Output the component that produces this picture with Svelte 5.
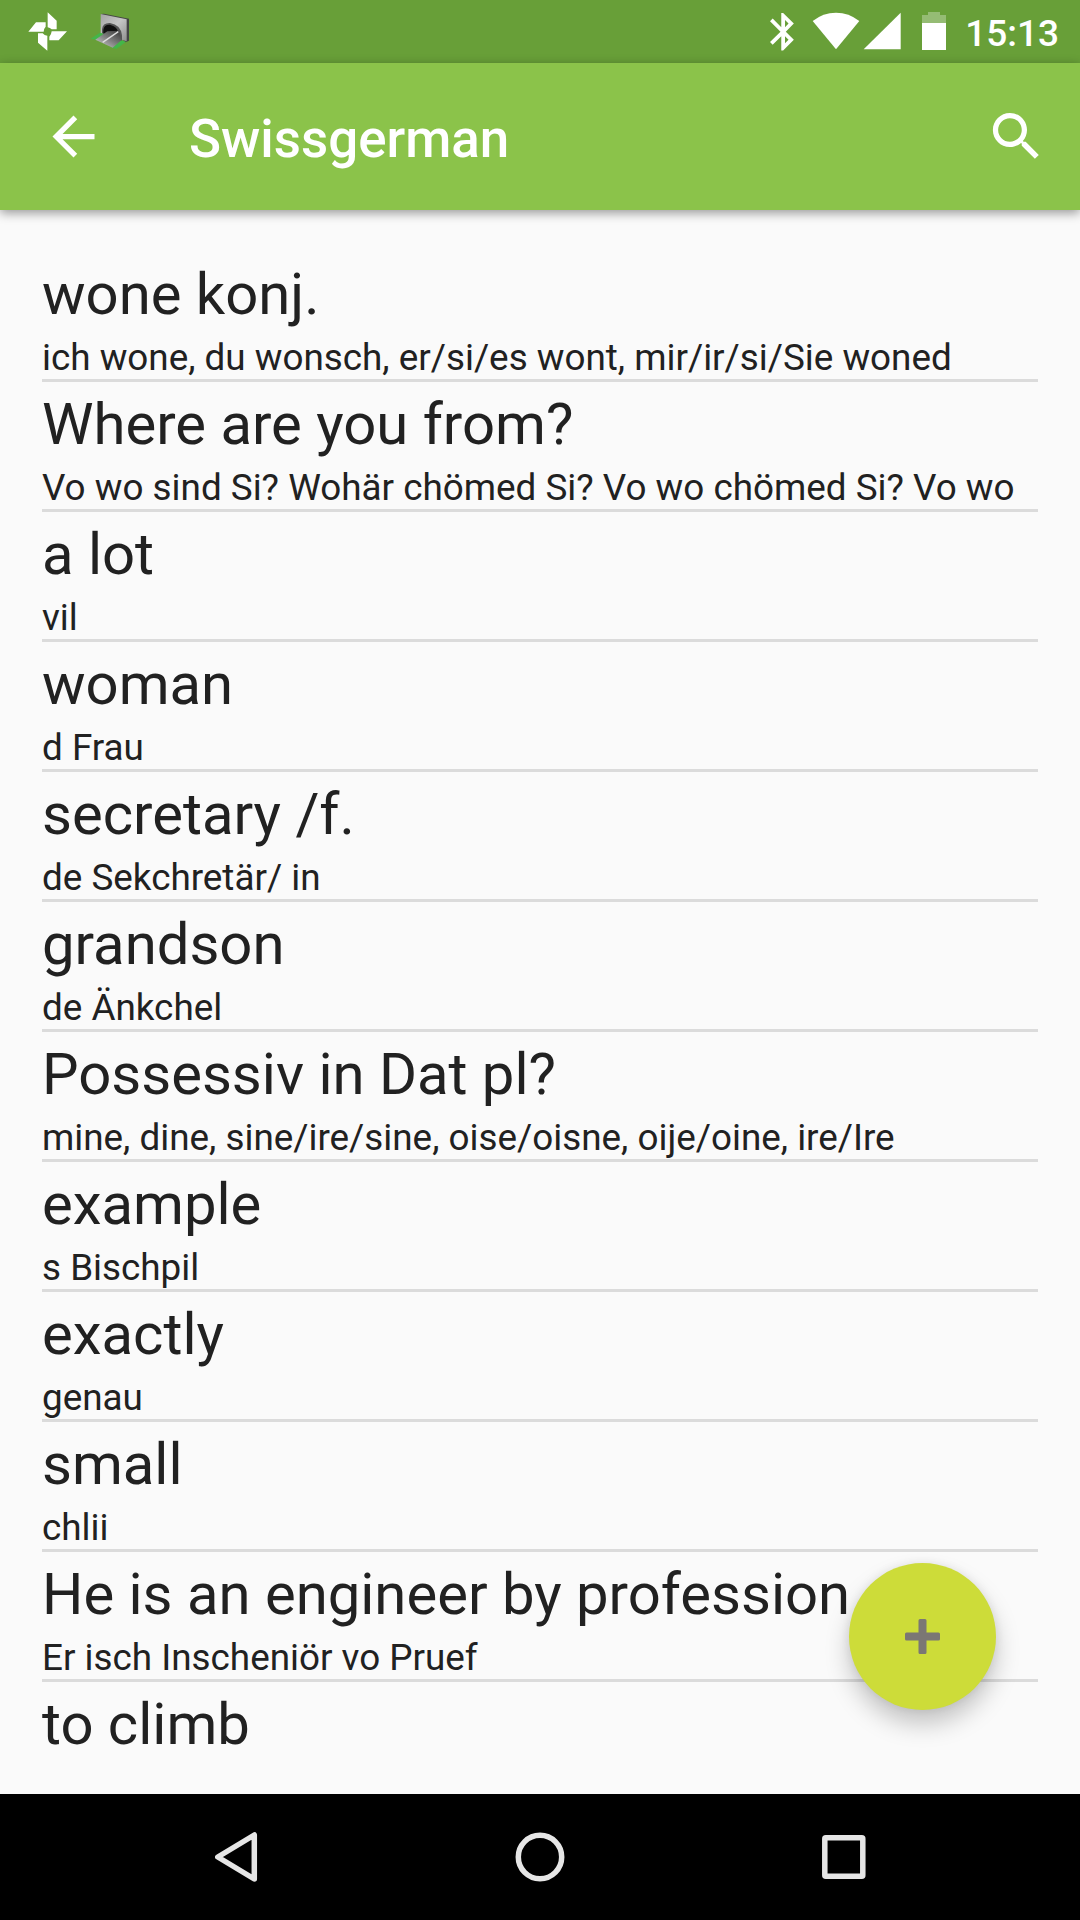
<script>
  const words = [
    ['wone konj.', 'ich wone, du wonsch, er/si/es wont, mir/ir/si/Sie woned'],
    ['Where are you from?', 'Vo wo sind Si? Wohär chömed Si? Vo wo chömed Si? Vo wo'],
    ['a lot', 'vil'],
    ['woman', 'd Frau'],
    ['secretary /f.', 'de Sekchretär/ in'],
    ['grandson', 'de Änkchel'],
    ['Possessiv in Dat pl?', 'mine, dine, sine/ire/sine, oise/oisne, oije/oine, ire/Ire'],
    ['example', 's Bischpil'],
    ['exactly', 'genau'],
    ['small', 'chlii'],
    ['He is an engineer by profession', 'Er isch Inscheniör vo Pruef'],
    ['to climb', '']
  ];
</script>

<div class="screen">
  <div class="status">
    <svg class="photos" viewBox="84 36 120 120" fill="#fff">
      <path d="M143 37L170 62V88H155Q150 83 143 82Z" />
      <path d="M85 95L108 67H137V80Q131 86 131 95Z" />
      <path d="M114 100H128Q133 107 142 107V152L114 128Z" />
      <path d="M201 94L176 121H148V110Q154 104 155 94Z" />
    </svg>
    <svg class="tunnel" viewBox="270 36 120 120">
      <defs>
        <linearGradient id="face" x1="0" y1="0" x2="1" y2="1">
          <stop offset="0" stop-color="#a4a4a4" />
          <stop offset=".5" stop-color="#c6c6c6" />
          <stop offset="1" stop-color="#8f8f8f" />
        </linearGradient>
        <linearGradient id="road" x1="1" y1="0" x2="0" y2="1">
          <stop offset="0" stop-color="#333" />
          <stop offset=".5" stop-color="#808080" />
          <stop offset="1" stop-color="#d8d8d8" />
        </linearGradient>
      </defs>
      <path d="M302 42L312 41L387 56V122L376 127L360 112Z" fill="#444" />
      <path d="M302 42L380 58V124L302 100Z" fill="url(#face)" />
      <path d="M306 100V88Q308 68 330 69Q362 74 366 106V124L330 116Z" fill="#555" />
      <path d="M310 100V90Q312 73 330 74Q352 79 356 100L340 112Z" fill="#101010" />
      <path d="M272 116L300 98L312 102L290 120Z" fill="#43b649" />
      <path d="M334 144L362 121L378 125L350 146Z" fill="#43b649" />
      <path d="M286 119L322 94L357 92L364 121L338 143Z" fill="url(#road)" />
      <path d="M308 127L355 95" stroke="#ddd" stroke-width="4" />
    </svg>
    <div class="spacer"></div>
    <svg class="bluetooth" viewBox="84 36 84 120" fill="#fff">
      <path transform="translate(62 27.5) scale(5.62)" d="M17.71 7.71L12 2h-1v7.59L6.41 5 5 6.41 10.59 12 5 17.59 6.41 19 11 14.41V22h1l5.71-5.71-4.3-4.29 4.3-4.29zM13 5.83l1.88 1.88L13 9.59V5.83zm1.88 10.46L13 18.17v-3.76l1.88 1.88z" />
    </svg>
    <svg class="wifi" viewBox="216 36 144 120" fill="#fff">
      <path d="M218 63Q249 38 288 38T358 63L288 148Z" />
    </svg>
    <svg class="signal" viewBox="369 36 114 120" fill="#fff"><path d="M482 38V148H371Z" /></svg>
    <svg class="battery" viewBox="546 36 72 120">
      <path d="M546 69V45H564V36H600V45H618V69Z" fill="#fff" opacity=".3" />
      <path d="M546 69H618V150H546Z" fill="#fff" />
    </svg>
    <span class="time">15:13</span>
  </div>

  <header class="bar">
    <svg class="icon" viewBox="0 0 24 24" fill="#fff"><path d="M20 11H7.83l5.59-5.59L12 4l-8 8 8 8 1.41-1.41L7.83 13H20v-2z" /></svg>
    <h1>Swissgerman</h1>
    <svg class="icon" viewBox="0 0 24 24" fill="#fff"><path d="M15.5 14h-.79l-.28-.27C15.41 12.59 16 11.11 16 9.5 16 5.91 13.09 3 9.5 3S3 5.91 3 9.5 5.91 16 9.5 16c1.61 0 3.09-.59 4.23-1.57l.27.28v.79l5 4.99L20.49 19l-4.99-5zm-6 0C7.01 14 5 11.99 5 9.5S7.01 5 9.5 5 14 7.01 14 9.5 11.99 14 9.5 14z" /></svg>
  </header>

  <main>
    {#each words as [word, translation]}
      <div class="row">
        <div class="word">{word}</div>
        <div class="translation">{translation}</div>
      </div>
    {/each}
  </main>

  <nav>
    <svg class="nav-icon" viewBox="0 0 60 60"><path d="M11.8 30L48.3 8V52Z" /></svg>
    <svg class="nav-icon" viewBox="0 0 60 60"><circle cx="30" cy="30" r="21.7" /></svg>
    <svg class="nav-icon" viewBox="0 0 60 60"><rect x="10.8" y="10.8" width="38" height="38.4" rx="1" /></svg>
  </nav>

  <button class="fab" aria-label="Add">
    <svg viewBox="0.5 0.5 35 35" fill="#7b7774"><path d="M15.5 .5h5q1.5 0 1.5 1.5v12h12q1.5 0 1.5 1.5v5q0 1.5-1.5 1.5h-12v12q0 1.5-1.5 1.5h-5q-1.5 0-1.5-1.5v-12h-12q-1.5 0-1.5-1.5v-5q0-1.5 1.5-1.5h12v-12q0-1.5 1.5-1.5z" /></svg>
  </button>
</div>

<style>
  :global(body) { margin: 0; }
  .screen {
    position: relative;
    display: flex;
    flex-direction: column;
    width: 1080px;
    height: 1920px;
    overflow: hidden;
    background: #fafafa;
    color: #212121;
    font-family: Roboto, "Liberation Sans", sans-serif;
  }
  .status {
    flex: none;
    box-sizing: border-box;
    display: flex;
    align-items: flex-start;
    height: 63px;
    padding: 12px 21px 0 28px;
    background: #689f38;
  }
  .status svg { flex: none; height: 40px; }
  .photos { width: 40px; }
  .tunnel { width: 40px; margin-left: 22px; }
  .spacer { flex: 1; }
  .bluetooth { width: 28px; margin-right: 16px; }
  .wifi { width: 48px; margin-right: 3px; }
  .signal { width: 38px; margin-right: 21px; }
  .battery { width: 24px; }
  .time {
    width: 113px;
    text-align: right;
    color: #fff;
    font-size: 37px;
    font-weight: 500;
    line-height: 43px;
    white-space: nowrap;
  }
  .bar {
    position: relative;
    z-index: 1;
    flex: none;
    box-sizing: border-box;
    display: flex;
    align-items: center;
    height: 147px;
    padding: 0 32px 0 42px;
    background: #8bc34a;
    box-shadow: 0 3px 10px rgba(0, 0, 0, .4);
  }
  .icon { flex: none; width: 63px; height: 63px; }
  h1 {
    flex: 1;
    margin: 5px 0 0 84px;
    color: #fff;
    font-size: 52.9px;
    font-weight: 500;
    line-height: 62px;
  }
  main {
    flex: 1;
    min-height: 0;
    overflow: hidden;
    padding: 42px 42px 0;
  }
  .row {
    box-sizing: border-box;
    height: 130px;
    border-bottom: 3px solid #dbdbdb;
    white-space: nowrap;
  }
  .word { font-size: 58px; line-height: 84px; }
  .translation { height: 43px; font-size: 36.85px; line-height: 43px; }
  nav {
    position: relative;
    flex: none;
    display: flex;
    justify-content: center;
    align-items: center;
    gap: 244px;
    height: 126px;
    background: #000;
  }
  .nav-icon {
    width: 60px;
    height: 60px;
    fill: none;
    stroke: #e6e6e6;
    stroke-width: 5.5;
    stroke-linejoin: round;
  }
  .fab {
    position: absolute;
    z-index: 2;
    left: 849px;
    top: 1563px;
    display: flex;
    align-items: center;
    justify-content: center;
    width: 147px;
    height: 147px;
    padding: 0;
    border: 0;
    border-radius: 50%;
    background: #cddc39;
    box-shadow: 0 14px 24px rgba(0, 0, 0, .22), 0 0 10px rgba(0, 0, 0, .08);
  }
  .fab svg { width: 35px; height: 35px; }
</style>
